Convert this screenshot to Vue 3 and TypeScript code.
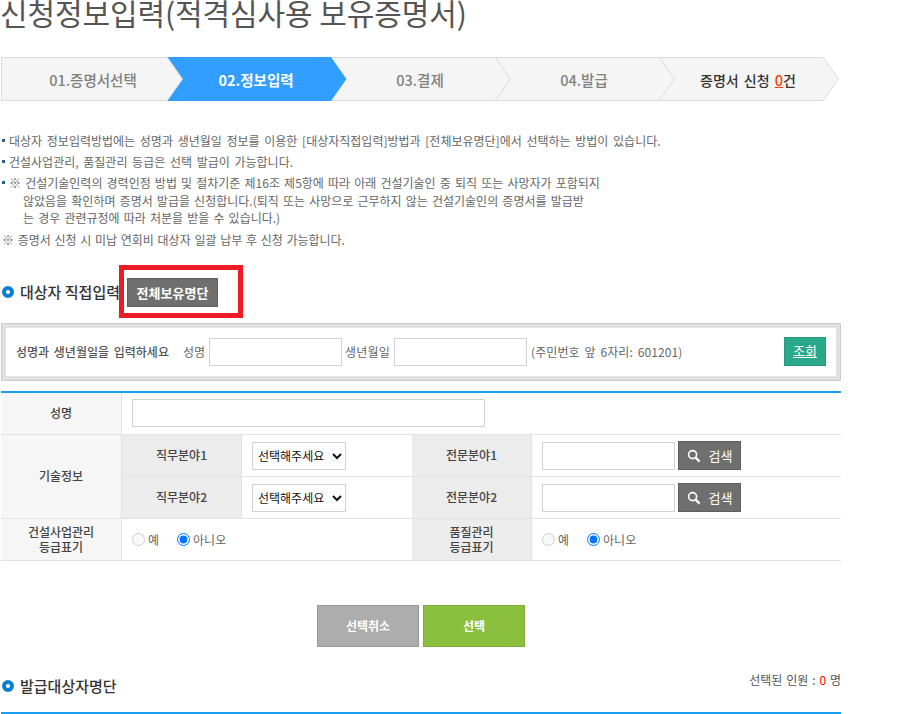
<script setup lang="ts">
const steps = [
  { label: '01.증명서선택', active: false },
  { label: '02.정보입력', active: true },
  { label: '03.결제', active: false },
  { label: '04.발급', active: false },
]
</script>

<template>
  <div class="page">
    <h1 class="title">신청정보입력(적격심사용 보유증명서)</h1>

    <div class="stepper">
      <div v-for="s in steps" :key="s.label" class="step" :class="{ active: s.active }">
        <span>{{ s.label }}</span>
        <svg class="tip" width="16" height="44" viewBox="0 0 16 44">
          <polygon points="0,0 15.5,22 0,44" :fill="s.active ? '#329eff' : '#f5f5f5'" />
          <polyline v-if="!s.active" points="0,0 15.5,22 0,44" fill="none" stroke="#dcdcdc" />
        </svg>
      </div>
      <div class="step cart">
        <span>증명서 신청 <em>0</em>건</span>
        <svg class="tip" width="16" height="44" viewBox="0 0 16 44">
          <polygon points="0,0 15.5,22 0,44" fill="#f5f5f5" />
          <polyline points="0,0 15.5,22 0,44" fill="none" stroke="#dcdcdc" />
        </svg>
      </div>
    </div>

    <ul class="notes">
      <li>대상자 정보입력방법에는 성명과 생년월일 정보를 이용한 [대상자직접입력]방법과 [전체보유명단]에서 선택하는 방법이 있습니다.</li>
      <li>건설사업관리, 품질관리 등급은 선택 발급이 가능합니다.</li>
      <li class="multi">※ 건설기술인력의 경력인정 방법 및 절차기준 제16조 제5항에 따라 아래 건설기술인 중 퇴직 또는 사망자가 포함되지<br><span class="cont">않았음을 확인하며 증명서 발급을 신청합니다.(퇴직 또는 사망으로 근무하지 않는 건설기술인의 증명서를 발급받</span><br><span class="cont">는 경우 관련규정에 따라 처분을 받을 수 있습니다.)</span></li>
    </ul>
    <p class="warn">※ 증명서 신청 시 미납 연회비 대상자 일괄 납부 후 신청 가능합니다.</p>

    <div class="heading first">
      <i class="dot"></i>
      <h2>대상자 직접입력</h2>
      <button class="all" type="button">전체보유명단</button>
      <div class="highlight"></div>
    </div>

    <div class="searchbox">
      <div class="searchinner">
        <strong>성명과 생년월일을 입력하세요</strong>
        <label class="l1">성명</label>
        <input class="txt" type="text" />
        <label class="l2">생년월일</label>
        <input class="txt" type="text" />
        <span class="hint">(주민번호 앞 6자리: 601201)</span>
        <a class="lookup">조회</a>
      </div>
    </div>

    <table class="form">
      <colgroup>
        <col style="width:121px" /><col style="width:120px" /><col style="width:170px" /><col style="width:120px" /><col style="width:309px" />
      </colgroup>
      <tbody>
        <tr>
          <th class="lv1">성명</th>
          <td colspan="4"><input class="txt name" type="text" /></td>
        </tr>
        <tr>
          <th class="lv1" rowspan="2">기술정보</th>
          <th class="lv2">직무분야1</th>
          <td class="ctl"><select class="sel"><option>선택해주세요</option></select></td>
          <th class="lv2">전문분야1</th>
          <td class="ctl">
            <div class="field">
              <input class="txt" type="text" />
              <button class="find" type="button">
                <svg width="14" height="14" viewBox="0 0 14 14" fill="none" stroke="#fff" stroke-width="1.6"><circle cx="5.6" cy="5.6" r="4" /><path d="M8.6 8.6 L12.6 12.6" stroke-width="2.2" /></svg>
                검색
              </button>
            </div>
          </td>
        </tr>
        <tr>
          <th class="lv2">직무분야2</th>
          <td class="ctl"><select class="sel"><option>선택해주세요</option></select></td>
          <th class="lv2">전문분야2</th>
          <td class="ctl">
            <div class="field">
              <input class="txt" type="text" />
              <button class="find" type="button">
                <svg width="14" height="14" viewBox="0 0 14 14" fill="none" stroke="#fff" stroke-width="1.6"><circle cx="5.6" cy="5.6" r="4" /><path d="M8.6 8.6 L12.6 12.6" stroke-width="2.2" /></svg>
                검색
              </button>
            </div>
          </td>
        </tr>
        <tr>
          <th class="lv1 two">건설사업관리<br>등급표기</th>
          <td colspan="2">
            <div class="radios">
              <label><input type="radio" disabled />예</label>
              <label><input type="radio" name="a" checked />아니오</label>
            </div>
          </td>
          <th class="lv2 two">품질관리<br>등급표기</th>
          <td>
            <div class="radios">
              <label><input type="radio" disabled />예</label>
              <label><input type="radio" name="b" checked />아니오</label>
            </div>
          </td>
        </tr>
      </tbody>
    </table>

    <div class="actions">
      <button class="big cancel" type="button">선택취소</button>
      <button class="big ok" type="button">선택</button>
    </div>

    <div class="heading second">
      <i class="dot"></i>
      <h2>발급대상자명단</h2>
      <span class="count">선택된 인원 : <em>0</em> 명</span>
    </div>
    <div class="rule"></div>
  </div>
</template>

<style>
html, body { margin: 0; background: #fff; overflow: hidden; }
</style>

<style scoped>
.page {
  width: 840px;
  height: 714px;
  margin-left: 1px;
  overflow: hidden;
  font-family: "Noto Sans CJK KR", "Noto Sans", sans-serif;
  font-size: 12px;
  color: #666;
  word-spacing: 2px;
}
.title {
  margin: -10px 0 0 -1px;
  height: 48px;
  font-size: 30px;
  line-height: 44px;
  font-weight: 400;
  color: #555;
  white-space: nowrap;
  word-spacing: 0;
  letter-spacing: -0.1px;
}
.stepper {
  display: flex;
  width: 822px;
  height: 44px;
  margin-top: 19px;
}
.step {
  position: relative;
  box-sizing: border-box;
  width: 164px;
  height: 44px;
  padding-left: 14px;
  border-top: 1px solid #dcdcdc;
  border-bottom: 1px solid #dcdcdc;
  background: #f5f5f5;
  display: flex;
  align-items: center;
  justify-content: center;
  font-size: 14.5px;
  font-weight: 500;
  color: #808080;
}
.step:first-child {
  width: 166px;
  padding-left: 17px;
  border-left: 1px solid #dcdcdc;
}
.step.active {
  border-color: #329eff;
  background: #329eff;
  color: #fff;
  font-weight: 700;
}
.step.cart {
  color: #333;
  font-size: 14px;
}
.step.cart em {
  font-style: normal;
  color: #ff3c00;
  text-decoration: underline;
  font-size: 14.5px;
}
.tip {
  position: absolute;
  left: 100%;
  top: -1px;
  z-index: 2;
  overflow: visible;
}
.notes {
  list-style: none;
  margin: 29px 0 0;
  padding: 0;
  line-height: 21px;
  white-space: nowrap;
}
.notes li {
  position: relative;
  padding-left: 8px;
}
.notes li::before {
  content: "";
  position: absolute;
  left: 1px;
  top: 9px;
  width: 3px;
  height: 3px;
  background: #2c5f8a;
}
.notes li.multi {
  line-height: 17.5px;
  margin-top: 2px;
  word-spacing: 1.45px;
}
.notes li.multi::before { top: 7px; }
.cont { padding-left: 14px; }
.warn {
  margin: 2px 0 0 1px;
  line-height: 21px;
  white-space: nowrap;
  word-spacing: 1px;
}
.heading {
  position: relative;
  display: flex;
  align-items: center;
}
.heading.first {
  margin-top: 28px;
  height: 29px;
}
.dot {
  box-sizing: border-box;
  width: 12px;
  height: 12px;
  margin-left: 1px;
  border: 4px solid #0a7fd0;
  border-radius: 50%;
  flex: none;
}
.heading h2 {
  margin: 0 0 0 6px;
  font-size: 15px;
  font-weight: 500;
  color: #333;
  line-height: 20px;
  word-spacing: 0;
}
.all {
  position: absolute;
  left: 126px;
  top: 0;
  box-sizing: border-box;
  width: 91px;
  height: 29px;
  padding: 0;
  border: 1px solid #5e5e5e;
  background: #6f6f6f;
  color: #fff;
  font: 700 13px "Noto Sans CJK KR", sans-serif;
}
.highlight {
  position: absolute;
  left: 118px;
  top: -13px;
  box-sizing: border-box;
  width: 124px;
  height: 53px;
  border: 5px solid #ed1c24;
  pointer-events: none;
}
.searchbox {
  box-sizing: border-box;
  height: 58px;
  margin-top: 16px;
  border: 1px solid #ccc;
  padding: 4px;
  background: #e0e0e0;
}
.searchinner {
  height: 48px;
  box-sizing: border-box;
  padding-left: 10px;
  padding-right: 10px;
  background: #fff;
  display: flex;
  align-items: center;
  white-space: nowrap;
}
.searchinner strong {
  font-weight: 500;
  color: #555;
}
.l1 { margin-left: 14px; margin-right: 4px; }
.l2 { margin-left: 3px; margin-right: 4px; letter-spacing: 0.2px; }
.txt {
  box-sizing: border-box;
  width: 133px;
  height: 28px;
  padding: 0 4px;
  border: 1px solid #d2d2d2;
  background: #fff;
  outline: none;
}
.hint { margin-left: 4px; letter-spacing: 0.1px; }
.lookup {
  box-sizing: border-box;
  margin-left: auto;
  width: 42px;
  height: 29px;
  border: 1px solid #259a7e;
  background: #2aa88a;
  color: #fff;
  text-align: center;
  line-height: 26px;
  font-size: 13px;
  text-decoration: underline;
}
.form {
  width: 840px;
  margin-top: 10px;
  border-top: 2px solid #1a9ff0;
  border-collapse: separate;
  border-spacing: 0;
  table-layout: fixed;
}
.form th, .form td {
  box-sizing: border-box;
  height: 42px;
  padding: 0;
  border-bottom: 1px solid #e2e2e2;
}
.form th {
  font-size: 12px;
  font-weight: 500;
  color: #444;
  text-align: center;
  line-height: 15.5px;
}
.lv1 {
  background: #f6f6f6;
  border-right: 1px solid #e2e2e2;
}
.lv2 {
  background: #ececec;
  border-right: 1px solid #e2e2e2;
}
.form td { padding-left: 10px; }
.form td.ctl { padding-top: 1px; }
.txt.name { width: 353px; }
.sel {
  box-sizing: border-box;
  width: 94px;
  height: 28px;
  padding: 0 0 0 1px;
  border: 1px solid #d2d2d2;
  border-radius: 0;
  background: #fff;
  font: 400 12px "Noto Sans CJK KR", sans-serif;
  color: #111;
  outline: none;
}
.field {
  display: flex;
  align-items: center;
  gap: 3px;
}
.find {
  box-sizing: border-box;
  width: 63px;
  height: 29px;
  padding: 0;
  border: 1px solid #5e5e5e;
  background: #6f6f6f;
  color: #fff;
  font: 400 13px "Noto Sans CJK KR", sans-serif;
  display: flex;
  align-items: center;
  justify-content: center;
  gap: 8px;
}
.radios {
  display: flex;
  align-items: center;
  gap: 18px;
}
.radios label {
  display: flex;
  align-items: center;
  gap: 3px;
  color: #666;
}
.radios input {
  width: 13px;
  height: 13px;
  margin: 0;
}
.actions {
  display: flex;
  justify-content: center;
  gap: 4px;
  margin-top: 44px;
}
.big {
  box-sizing: border-box;
  width: 102px;
  height: 42px;
  padding: 0;
  color: #fff;
  font: 700 12px "Noto Sans CJK KR", sans-serif;
}
.cancel { background: #adadad; border: 1px solid #999; }
.ok { background: #8bc03f; border: 1px solid #7cae38; }
.heading.second {
  margin-top: 28px;
  height: 22px;
}
.count {
  position: absolute;
  right: 0;
  top: -4px;
  line-height: 18px;
  color: #555;
  word-spacing: 1.2px;
}
.count em {
  font-style: normal;
  color: #f00;
}
.rule {
  height: 2px;
  margin-top: 15px;
  background: #1a9ff0;
}
</style>
